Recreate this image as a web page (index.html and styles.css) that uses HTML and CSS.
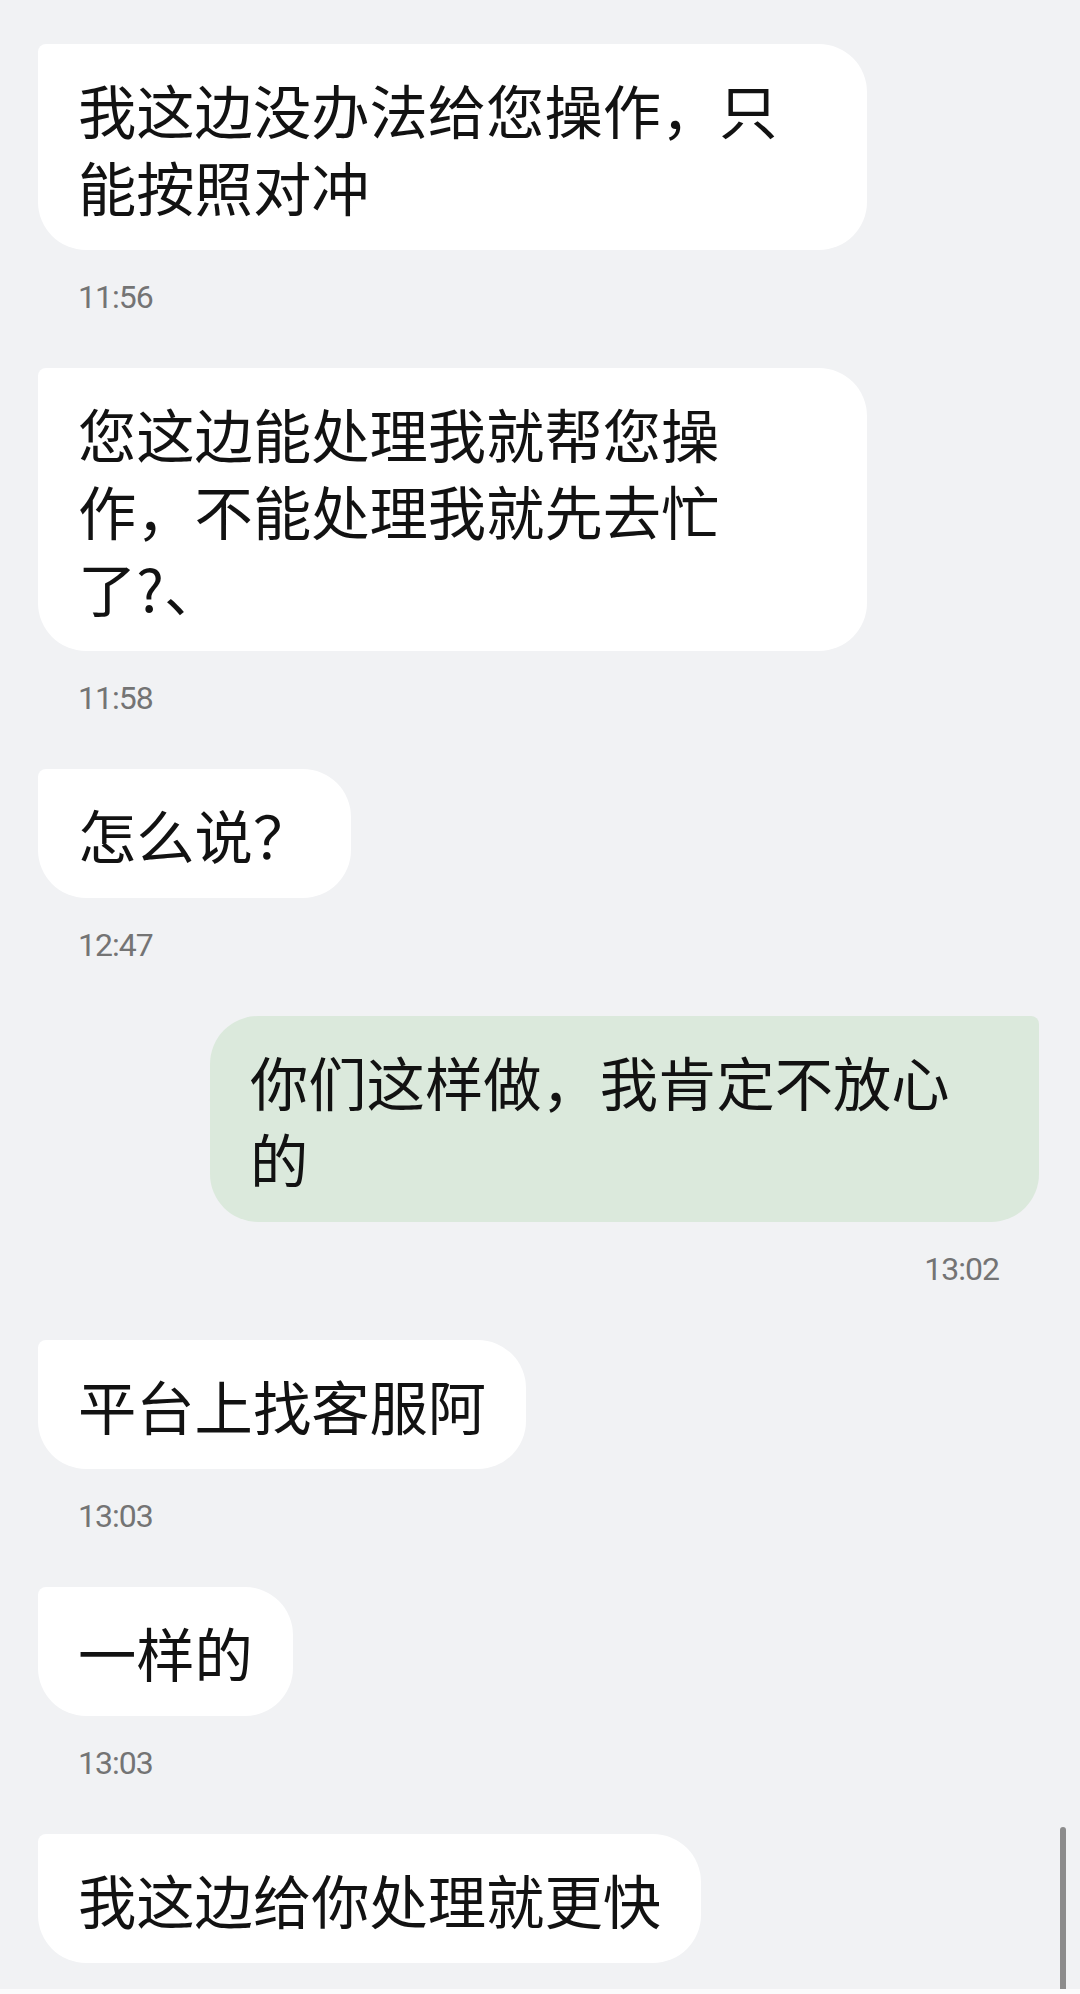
FILE: index.html
```html
<!DOCTYPE html>
<html lang="zh-CN">
<head>
    <meta charset="UTF-8">
    <meta name="viewport" content="width=device-width, initial-scale=1.0">
    <title>聊天记录</title>
    <link rel="stylesheet" href="styles.css">
</head>
<body>
    <div class="chat">
        <div class="msg in">
            <div class="bubble">我这边没办法给您操作，只能按照对冲</div>
            <div class="time">11:56</div>
        </div>
        <div class="msg in">
            <div class="bubble">您这边能处理我就帮您操作，不能处理我就先去忙了?、</div>
            <div class="time">11:58</div>
        </div>
        <div class="msg in">
            <div class="bubble">怎么说？</div>
            <div class="time">12:47</div>
        </div>
        <div class="msg out">
            <div class="bubble">你们这样做，我肯定不放心的</div>
            <div class="time">13:02</div>
        </div>
        <div class="msg in">
            <div class="bubble">平台上找客服阿</div>
            <div class="time">13:03</div>
        </div>
        <div class="msg in">
            <div class="bubble">一样的</div>
            <div class="time">13:03</div>
        </div>
        <div class="msg in">
            <div class="bubble">我这边给你处理就更快</div>
        </div>
    </div>

    <div class="scrollbar"></div>
    <div class="bottom-bar"></div>
</body>
</html>
```

FILE: styles.css
```css
:root {
    --bg-color: #f1f2f4;
    --bubble-in: #ffffff;
    --bubble-out: #dbe9dc;
    --text-color: #121212;
    --time-color: #747474;
}

* {
    margin: 0;
    padding: 0;
    box-sizing: border-box;
}

body {
    font-family: "Noto Sans CJK SC", "Noto Sans", sans-serif;
    color: var(--text-color);
    background-color: var(--bg-color);
    min-height: 1994px;
    overflow: hidden;
}

.chat {
    display: flex;
    flex-direction: column;
    padding: 44px 41px 0 38px;
}

.msg {
    display: flex;
    flex-direction: column;
    margin-bottom: 51px;
}

.msg.in {
    align-items: flex-start;
}

.msg.out {
    align-items: flex-end;
}

.bubble {
    max-width: 829px;
    padding: 26px 40px;
    font-size: 58.3px;
    line-height: 77px;
    background-color: var(--bubble-in);
    border-radius: 8px 48px 48px 48px;
}

.out .bubble {
    background-color: var(--bubble-out);
    border-radius: 48px 8px 48px 48px;
}

.time {
    margin-top: 27px;
    padding: 0 40px;
    font-family: Roboto, "Liberation Sans", sans-serif;
    font-size: 32px;
    line-height: 40px;
    letter-spacing: -1px;
    color: var(--time-color);
}

.scrollbar {
    position: fixed;
    right: 14px;
    bottom: 0;
    width: 6px;
    height: 167px;
    background-color: #8c8c8c;
    border-radius: 3px 3px 0 0;
}

.bottom-bar {
    position: fixed;
    left: 0;
    right: 0;
    bottom: 0;
    height: 5px;
    background-color: #fbfbfc;
}
```
